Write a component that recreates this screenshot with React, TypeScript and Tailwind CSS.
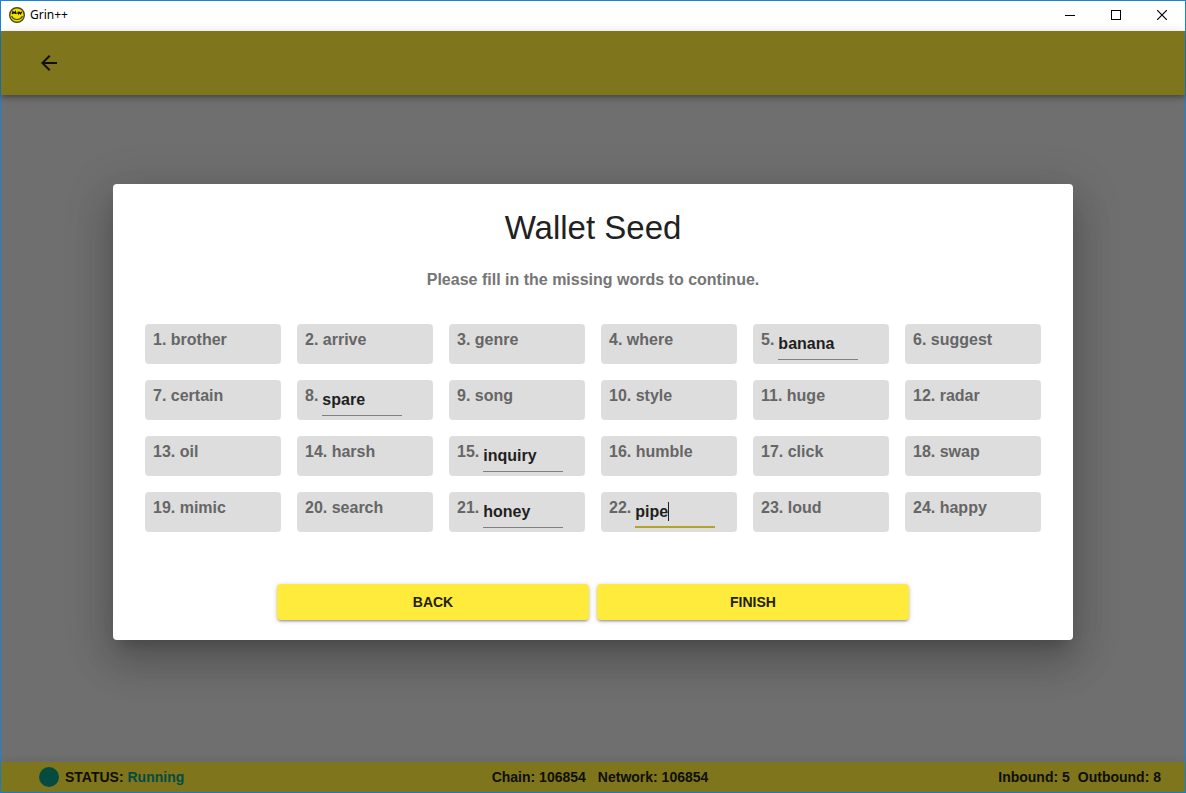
import { useState } from "react";

type Word = { text: string; editable?: boolean; focused?: boolean };

const WORDS: Word[] = [
  { text: "brother" },
  { text: "arrive" },
  { text: "genre" },
  { text: "where" },
  { text: "banana", editable: true },
  { text: "suggest" },
  { text: "certain" },
  { text: "spare", editable: true },
  { text: "song" },
  { text: "style" },
  { text: "huge" },
  { text: "radar" },
  { text: "oil" },
  { text: "harsh" },
  { text: "inquiry", editable: true },
  { text: "humble" },
  { text: "click" },
  { text: "swap" },
  { text: "mimic" },
  { text: "search" },
  { text: "honey", editable: true },
  { text: "pipe", editable: true, focused: true },
  { text: "loud" },
  { text: "happy" },
];

function GrinLogo() {
  return (
    <svg viewBox="0 0 16 16" className="size-4" aria-hidden="true">
      <circle cx="8" cy="8" r="7.3" fill="#f0e400" stroke="#4a4718" strokeWidth="1.4" />
      <path d="M3.3 7.2L3.9 4.7L5 6.2L6.3 4.7L6.7 7M9 4.7L9.5 6.8L10.6 5.3L11.6 6.8L12.7 4.7" fill="none" stroke="#15150c" strokeWidth="1.3" />
      <path d="M7.2 6.2H8.6" stroke="#15150c" strokeWidth="1" />
      <path d="M2.6 9C4.2 13.6 11.8 13.6 13.4 9" fill="none" stroke="#3d3b12" strokeWidth="1.1" />
    </svg>
  );
}

function TitleBar() {
  const control = "flex h-full w-[46px] items-center justify-center pb-[2px]";
  return (
    <div className="flex h-[30px] items-center justify-between bg-white pl-2 text-black">
      <div className="flex items-center gap-[5px] pb-[2px]">
        <GrinLogo />
        <span className="font-['Noto_Sans',sans-serif] text-xs">Grin++</span>
      </div>
      <div className="flex h-full">
        <button type="button" aria-label="Minimize" className={control}>
          <svg width="10" height="10" viewBox="0 0 10 10" shapeRendering="crispEdges">
            <path d="M0 5.5H10" stroke="#000" />
          </svg>
        </button>
        <button type="button" aria-label="Maximize" className={control}>
          <svg width="10" height="10" viewBox="0 0 10 10" shapeRendering="crispEdges">
            <path d="M.5 .5H9.5V9.5H.5Z" fill="none" stroke="#000" />
          </svg>
        </button>
        <button type="button" aria-label="Close" className={control}>
          <svg width="10" height="10" viewBox="0 0 10 10">
            <path d="M0 0L10 10M10 0L0 10" stroke="#000" strokeWidth="1.2" />
          </svg>
        </button>
      </div>
    </div>
  );
}

function SeedWord({ word, index }: { word: Word; index: number }) {
  const [value, setValue] = useState(word.text);
  const id = `seed-word-${index}`;

  if (!word.editable) {
    return (
      <li className="h-10 rounded-sm bg-[#dddddd] px-2 pt-1 leading-6 text-[#666666]">
        {index}. {word.text}
      </li>
    );
  }

  return (
    <li className="flex h-10 gap-1 rounded-sm bg-[#dddddd] px-2 pt-1 leading-6 text-[#666666]">
      <label htmlFor={id}>{index}.</label>
      <div className="relative w-20">
        <input
          id={id}
          value={value}
          onChange={(event) => setValue(event.target.value)}
          className={
            word.focused
              ? "block h-8 w-full border-b-2 border-[#b2a429] bg-transparent pt-[2px] text-[#1f1f1f] caret-transparent outline-none"
              : "block h-8 w-full border-b border-[#808080] bg-transparent pt-[2px] text-[#1f1f1f] outline-none"
          }
        />
        {word.focused && <span className="absolute top-[6px] left-[33px] h-[19px] w-px bg-[#1f1f1f]" />}
      </div>
    </li>
  );
}

function ActionButton({ children }: { children: string }) {
  return (
    <button
      type="button"
      className="h-9 rounded-sm bg-[#ffeb3b] text-sm font-bold text-[#211f08] shadow-[0_1px_5px_0_rgba(0,0,0,0.2),0_2px_2px_0_rgba(0,0,0,0.14),0_3px_1px_-2px_rgba(0,0,0,0.12)]"
    >
      {children}
    </button>
  );
}

export default function App() {
  return (
    <div className="flex min-h-screen flex-col border border-[#1883d7] font-['Liberation_Sans',Arial,sans-serif]">
      <TitleBar />
      <div className="relative flex flex-1 flex-col bg-[#dedede]">
        <header className="z-0 flex h-16 items-center bg-[#ffeb3b] px-9 shadow-[0_2px_4px_-1px_rgba(0,0,0,0.2),0_4px_5px_0_rgba(0,0,0,0.14),0_1px_10px_0_rgba(0,0,0,0.12)]">
          <button type="button" aria-label="Back" className="text-[#211f08]">
            <svg viewBox="0 0 24 24" className="size-6" fill="currentColor">
              <path d="M20 11H7.83l5.59-5.59L12 4l-8 8 8 8 1.41-1.41L7.83 13H20v-2z" />
            </svg>
          </button>
        </header>
        <main className="flex-1" />
        <footer className="grid h-[30px] grid-cols-3 items-center bg-[#ffeb3b] pr-6 pl-[38px] text-sm font-bold text-[#211f08] shadow-[0_1px_10px_0_rgba(0,0,0,0.12)]">
          <div className="flex items-center gap-[6px]">
            <span className="size-5 rounded-full bg-[#0a9680]" />
            <span>
              STATUS: <span className="text-[#0a9680]">Running</span>
            </span>
          </div>
          <div className="flex justify-center gap-3">
            <span>Chain: 106854</span>
            <span>Network: 106854</span>
          </div>
          <div className="flex justify-end gap-2">
            <span>Inbound: 5</span>
            <span>Outbound: 8</span>
          </div>
        </footer>

        <div className="absolute inset-0 flex items-center justify-center bg-black/50 px-8">
          <section
            role="dialog"
            aria-modal="true"
            aria-labelledby="seed-title"
            className="w-full max-w-[960px] rounded-sm bg-white px-8 pt-6 pb-5 shadow-[0_11px_15px_-7px_rgba(0,0,0,0.2),0_24px_38px_3px_rgba(0,0,0,0.14),0_9px_46px_8px_rgba(0,0,0,0.12)]"
          >
            <h1 id="seed-title" className="text-center text-[33px] leading-10 text-[#212121]">
              Wallet Seed
            </h1>
            <p className="mt-5 text-center leading-6 font-bold text-[#757575]">
              Please fill in the missing words to continue.
            </p>
            <ol className="mt-8 grid grid-cols-6 gap-4 font-bold">
              {WORDS.map((word, i) => (
                <SeedWord key={word.text} word={word} index={i + 1} />
              ))}
            </ol>
            <div className="mx-auto mt-[52px] grid max-w-[632px] grid-cols-2 gap-2">
              <ActionButton>BACK</ActionButton>
              <ActionButton>FINISH</ActionButton>
            </div>
          </section>
        </div>
      </div>
    </div>
  );
}
